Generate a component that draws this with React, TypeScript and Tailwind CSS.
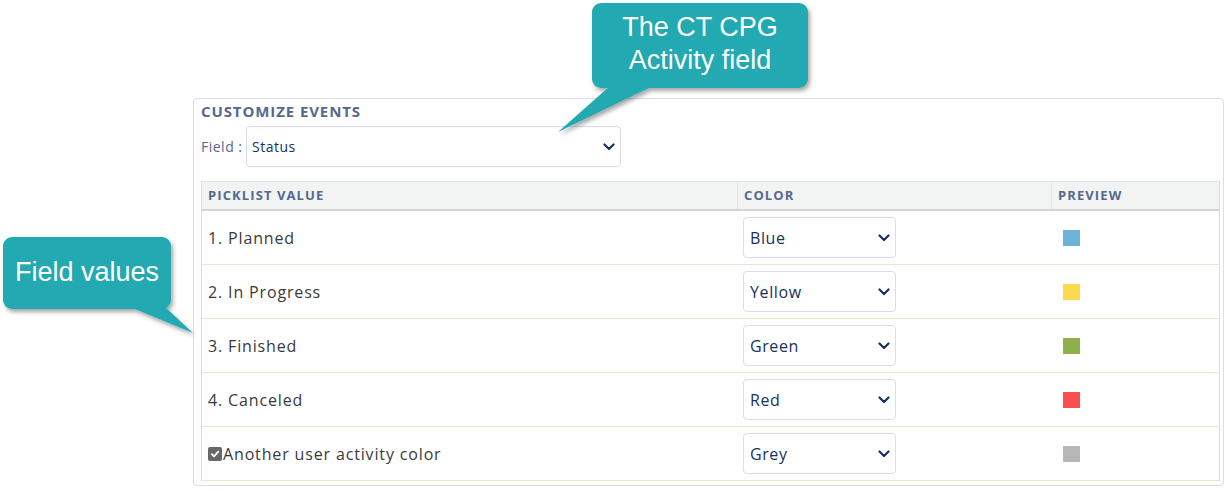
import React from "react";

const Chevron = () => (
  <svg width="12" height="8" viewBox="0 0 12 8" className="shrink-0">
    <path d="M1.5 1.5 L6 6 L10.5 1.5" fill="none" stroke="#16325c" strokeWidth="2.2" strokeLinecap="round" strokeLinejoin="round" />
  </svg>
);

const rows = [
  { label: "1. Planned", color: "Blue", swatch: "#6db3d9" },
  { label: "2. In Progress", color: "Yellow", swatch: "#fdd94e" },
  { label: "3. Finished", color: "Green", swatch: "#8cb04a" },
  { label: "4. Canceled", color: "Red", swatch: "#f94e4e" },
  { label: "Another user activity color", color: "Grey", swatch: "#b7b7b7", check: true },
];

export default function App() {
  return (
    <div className="relative w-[1229px] h-[494px] bg-white overflow-hidden" style={{ fontFamily: "'Open Sans', 'Noto Sans', sans-serif" }}>
      <div className="pl-[193px] pt-[98px]">
        <div className="w-[1031px] h-[388px] border border-[#d8dde6] rounded-[4px] pl-[7px] pr-[3px]">
          <div className="pt-[2px] text-[15px] font-bold text-[#54698d] tracking-[0.9px] leading-[20px]">CUSTOMIZE EVENTS</div>
          <div className="flex items-center mt-[5px]">
            <span className="text-[14px] text-[#54698d] w-[45px] tracking-[0.5px]">Field :</span>
            <div className="w-[375px] h-[41px] border border-[#d8dde6] rounded-[4px] flex items-center justify-between pl-[5px] pr-[5px]">
              <span className="text-[14px] text-[#16325c] tracking-[0.5px]">Status</span>
              <Chevron />
            </div>
          </div>
          <div className="mt-[14px] w-[1019px] border-l border-r border-[#d8dde6]">
            <div className="flex h-[30px] bg-[#f2f3f3] border-t border-[#e0e3e3] border-b-2 border-b-[#d4d4d4] text-[13px] font-bold text-[#54698d] tracking-[1.1px]">
              <div className="w-[536px] pl-[6px] flex items-center border-r border-[#e0e3e3]">PICKLIST VALUE</div>
              <div className="w-[314px] pl-[6px] flex items-center border-r border-[#e0e3e3]">COLOR</div>
              <div className="flex-1 pl-[6px] flex items-center">PREVIEW</div>
            </div>
            {rows.map((r) => (
              <div key={r.label} className="flex h-[54px] border-b border-[#ebe6cf] items-center">
                <div className="w-[536px] pl-[6px] text-[16px] text-[#3a3a3a] tracking-[0.85px] flex items-center">
                  {r.check && (
                    <span className="w-[14px] h-[14px] rounded-[2px] bg-[#666] flex items-center justify-center mr-[1px]">
                      <svg width="10" height="10" viewBox="0 0 10 10">
                        <path d="M1.8 5.2 L4 7.3 L8.3 2.6" fill="none" stroke="#fff" strokeWidth="1.8" strokeLinecap="round" strokeLinejoin="round" />
                      </svg>
                    </span>
                  )}
                  {r.label}
                </div>
                <div className="w-[314px] pl-[5px]">
                  <div className="w-[153px] h-[41px] border border-[#d8dde6] rounded-[4px] flex items-center justify-between pl-[6px] pr-[5px]">
                    <span className="text-[16px] text-[#16325c] tracking-[0.6px]">{r.color}</span>
                    <Chevron />
                  </div>
                </div>
                <div className="flex-1 pl-[11px]">
                  <div className="w-[17px] h-[16px]" style={{ backgroundColor: r.swatch }} />
                </div>
              </div>
            ))}
          </div>
        </div>
      </div>

      {/* Top callout */}
      <div className="absolute left-[540px] top-[0px] w-[280px] h-[140px] pointer-events-none">
        <svg width="280" height="140" className="absolute left-0 top-0">
          <defs>
            <filter id="sh1" x="-20%" y="-20%" width="140%" height="150%">
              <feDropShadow dx="2" dy="3" stdDeviation="2" floodColor="#000" floodOpacity="0.35" />
            </filter>
          </defs>
          <g filter="url(#sh1)">
            <rect x="52" y="3" width="216" height="85" rx="9" fill="#22a9b1" />
            <polygon points="70,86 113,86 18,132" fill="#22a9b1" />
          </g>
        </svg>
        <div className="absolute left-[52px] top-[11px] w-[216px] text-center text-white text-[27px] leading-[33px]" style={{ fontFamily: "'Liberation Sans', Arial, sans-serif" }}>
          The CT CPG<br />Activity field
        </div>
      </div>

      {/* Left callout */}
      <div className="absolute left-[0px] top-[232px] w-[200px] h-[110px] pointer-events-none">
        <svg width="200" height="110" className="absolute left-0 top-0">
          <defs>
            <filter id="sh2" x="-20%" y="-20%" width="140%" height="150%">
              <feDropShadow dx="2" dy="3" stdDeviation="2" floodColor="#000" floodOpacity="0.35" />
            </filter>
          </defs>
          <g filter="url(#sh2)">
            <rect x="3" y="5" width="168" height="72" rx="9" fill="#22a9b1" />
            <polygon points="130,75 165,75 193,101" fill="#22a9b1" />
          </g>
        </svg>
        <div className="absolute left-[3px] top-[24px] w-[168px] text-center text-white text-[27px] leading-[33px]" style={{ fontFamily: "'Liberation Sans', Arial, sans-serif" }}>
          Field values
        </div>
      </div>
    </div>
  );
}
